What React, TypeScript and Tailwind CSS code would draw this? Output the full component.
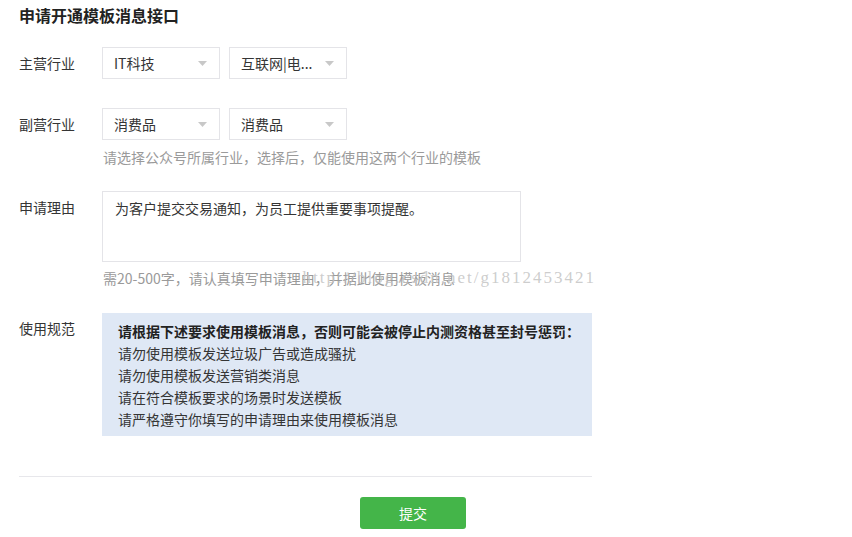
import React from 'react';

const FONT = { fontFamily: '"Noto Sans CJK SC", "Noto Sans", "Liberation Sans", sans-serif' };

const Select: React.FC<{ value: string }> = ({ value }) => (
  <div className="w-[118px] h-[32px] border border-[#e4e4e8] bg-white flex items-center pl-[11px] pr-[12px]">
    <span className="flex-1 text-[14px] leading-[20px] text-[#353535] whitespace-nowrap">{value}</span>
    <svg width="9" height="5" viewBox="0 0 9 5" className="shrink-0">
      <path d="M0 0 L9 0 L4.5 5 Z" fill="#c8c8c8" />
    </svg>
  </div>
);

const rules = [
  '请勿使用模板发送垃圾广告或造成骚扰',
  '请勿使用模板发送营销类消息',
  '请在符合模板要求的场景时发送模板',
  '请严格遵守你填写的申请理由来使用模板消息',
];

export default function App() {
  return (
    <div className="relative w-[852px] h-[537px] bg-white overflow-hidden" style={FONT}>
      <div className="pl-[19px] w-[592px]">
        {/* Title */}
        <h2 className="pt-[4px] text-[16px] leading-[22px] font-bold text-[#222]">申请开通模板消息接口</h2>

        {/* 主营行业 */}
        <div className="mt-[21px] flex">
          <div className="w-[83px] text-[14px] leading-[32px] text-[#353535]">主营行业</div>
          <div className="flex gap-[9px]">
            <Select value="IT科技" />
            <Select value="互联网|电..." />
          </div>
        </div>

        {/* 副营行业 */}
        <div className="mt-[29px] flex">
          <div className="w-[83px] text-[14px] leading-[32px] text-[#353535]">副营行业</div>
          <div>
            <div className="flex gap-[9px]">
              <Select value="消费品" />
              <Select value="消费品" />
            </div>
            <p className="mt-[7px] pl-[1px] text-[14px] leading-[20px] text-[#9a9a9a]">
              请选择公众号所属行业，选择后，仅能使用这两个行业的模板
            </p>
          </div>
        </div>

        {/* 申请理由 */}
        <div className="mt-[24px] flex">
          <div className="w-[83px] pt-[6px] text-[14px] leading-[20px] text-[#353535]">申请理由</div>
          <div>
            <div className="w-[419px] h-[71px] border border-[#e4e4e8] pt-[6px] pl-[12px] text-[14px] leading-[20px] text-[#353535]">
              为客户提交交易通知，为员工提供重要事项提醒。
            </div>
            <p className="mt-[6px] pl-[1px] text-[14px] leading-[20px] text-[#9a9a9a]">
              需20-500字，请认真填写申请理由，并据此使用模板消息
            </p>
          </div>
        </div>

        {/* 使用规范 */}
        <div className="mt-[25px] flex">
          <div className="w-[83px] pt-[5px] text-[14px] leading-[20px] text-[#353535]">使用规范</div>
          <div className="w-[490px] bg-[#dfe8f5] pt-[7px] pb-[6px] pl-[16px] text-[14px] leading-[22px] text-[#353535]">
            <p className="font-bold text-[#222]">请根据下述要求使用模板消息，否则可能会被停止内测资格甚至封号惩罚：</p>
            {rules.map((r) => (
              <p key={r}>{r}</p>
            ))}
          </div>
        </div>

        {/* Divider */}
        <div className="mt-[40px] h-px bg-[#e7e7eb]" />

        {/* Submit */}
        <div className="mt-[20px] pl-[341px]">
          <button className="w-[106px] h-[32px] rounded-[3px] bg-[#44b549] text-white text-[14px] leading-[20px]">
            提交
          </button>
        </div>
      </div>

      {/* CSDN watermark */}
      <div
        className="absolute top-[266px] right-[256px] text-[17px] leading-[24px] tracking-[2px] text-[#c4c4c4]/85 pointer-events-none whitespace-nowrap"
        style={{ fontFamily: '"Liberation Serif", serif' }}
      >
        http://blog.csdn.net/g1812453421
      </div>
    </div>
  );
}
